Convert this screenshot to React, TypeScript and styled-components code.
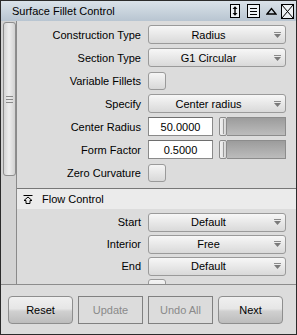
import React from "react";
import styled, { createGlobalStyle } from "styled-components";

const Global = createGlobalStyle`
  html, body { margin: 0; padding: 0; background: #dcdcdc; }
  body { width: 297px; height: 335px; overflow: hidden; }
`;

const Window = styled.div`
  width: 297px;
  height: 335px;
  box-sizing: border-box;
  border: 1px solid #2b2b2b;
  background: #dcdcdc;
  display: flex;
  flex-direction: column;
  overflow: hidden;
  font-family: "Liberation Sans", Arial, sans-serif;
  font-size: 11px;
  color: #000;
`;

const TitleBar = styled.div`
  height: 20px;
  flex: none;
  display: flex;
  align-items: center;
  padding: 0 2px 0 11px;
  background: linear-gradient(#dae2e9, #b8c5d1);
`;

const Title = styled.div`
  flex: 1;
  font-size: 11px;
  white-space: nowrap;
`;

const TitleIcon = styled.svg<{ $ml: number }>`
  display: block;
  margin-left: ${(p) => p.$ml}px;
  flex: none;
`;

const Body = styled.div`
  height: 264px;
  flex: none;
  box-sizing: border-box;
  display: flex;
  border-bottom: 1px solid #8c8c8c;
`;

const ScrollTrack = styled.div`
  width: 16px;
  flex: none;
  box-sizing: border-box;
  border-right: 1px solid #8a8a8a;
  background: #d3d3d3;
  padding: 1px 0 0 2px;
`;

const Thumb = styled.div`
  width: 13px;
  height: 154px;
  box-sizing: border-box;
  border: 1px solid #8e8e8e;
  border-radius: 3px;
  background: linear-gradient(90deg, #d4d4d4, #ededed 45%, #d2d2d2);
  display: flex;
  align-items: center;
  justify-content: center;
`;

const Content = styled.div`
  flex: 1;
  overflow: hidden;
  padding-top: 2px;
  display: flex;
  flex-direction: column;
`;

const Grid = styled.div<{ $row: number }>`
  display: grid;
  grid-template-columns: 124px 138px;
  column-gap: 7px;
  grid-auto-rows: ${(p) => p.$row}px;
  align-items: center;
  flex: none;
`;

const Label = styled.div`
  text-align: right;
  white-space: nowrap;
`;

const DropBox = styled.div`
  height: 19px;
  box-sizing: border-box;
  border: 1px solid #9a9a9a;
  border-radius: 3px;
  background: linear-gradient(#f7f7f7, #d9d9d9);
  display: flex;
  align-items: center;
`;

const DropText = styled.span`
  flex: 1;
  text-align: center;
  white-space: nowrap;
`;

const DropArrow = styled.svg`
  display: block;
  flex: none;
  margin: 0 4px 0 6px;
`;

const Check = styled.div`
  width: 18px;
  height: 18px;
  box-sizing: border-box;
  border: 1px solid #9a9a9a;
  border-radius: 3px;
  background: linear-gradient(#f5f5f5, #d8d8d8);
`;

const FieldRow = styled.div`
  display: flex;
  align-items: center;
`;

const Field = styled.div`
  width: 65px;
  height: 19px;
  box-sizing: border-box;
  background: #fff;
  border: 1px solid #8a8a8a;
  border-top-color: #6e6e6e;
  display: flex;
  align-items: center;
  justify-content: center;
`;

const Slider = styled.div`
  margin-left: 6px;
  flex: 1;
  height: 19px;
  display: flex;
`;

const Handle = styled.div`
  width: 8px;
  box-sizing: border-box;
  border: 1px solid #8a8a8a;
  border-radius: 2px;
  background: linear-gradient(90deg, #f2f2f2, #d6d6d6);
  position: relative;
  &::after {
    content: "";
    position: absolute;
    left: 3px;
    top: 1px;
    bottom: 1px;
    width: 1px;
    background: #9a9a9a;
  }
`;

const Track = styled.div`
  flex: 1;
  box-sizing: border-box;
  border: 1px solid #8c8c8c;
  border-left: none;
  background: linear-gradient(#9c9c9c, #bcbcbc);
`;

const SectionHeader = styled.div`
  margin-top: 4px;
  flex: none;
  height: 20px;
  border-top: 1px solid #777;
  background: #ebebeb;
  display: flex;
  align-items: center;
  padding-left: 6px;
`;

const HeaderIcon = styled.svg`
  display: block;
  margin-right: 9px;
`;

const LowerGrid = styled(Grid)`
  margin-top: 2px;
`;

const ButtonBar = styled.div`
  flex: 1;
  display: flex;
  gap: 5px;
  padding: 11px 0 0 7px;
`;

const Button = styled.div<{ $disabled?: boolean }>`
  width: 65px;
  height: 28px;
  box-sizing: border-box;
  display: flex;
  align-items: center;
  justify-content: center;
  font-size: 11px;
  border: 1px solid ${(p) => (p.$disabled ? "#808080" : "#8e8e8e")};
  border-radius: ${(p) => (p.$disabled ? "0" : "4px")};
  color: ${(p) => (p.$disabled ? "#8a8a8a" : "#000")};
  background: ${(p) =>
    p.$disabled
      ? "#dcdcdc"
      : "linear-gradient(#f0f0f0 0%, #e6e6e6 45%, #d0d0d0 55%, #bcbcbc 100%)"};
`;

const Arrow = () => (
  <DropArrow width="7" height="6" viewBox="0 0 7 6">
    <rect x="0" y="0" width="7" height="1" fill="#8a8a8a" />
    <polygon points="0,2 7,2 3.5,6" fill="#7a7a7a" />
  </DropArrow>
);

const Dropdown = ({ value }: { value: string }) => (
  <DropBox>
    <DropText>{value}</DropText>
    <Arrow />
  </DropBox>
);

const SliderField = ({ value }: { value: string }) => (
  <FieldRow>
    <Field>{value}</Field>
    <Slider>
      <Handle />
      <Track />
    </Slider>
  </FieldRow>
);

export default function App() {
  return (
    <>
      <Global />
      <Window>
        <TitleBar>
          <Title>Surface Fillet Control</Title>
          <TitleIcon $ml={0} width="10" height="14" viewBox="0 0 10 14">
            <rect x="0.5" y="0.5" width="9" height="13" fill="#eef2f5" stroke="#000" />
            <line x1="5" y1="4" x2="5" y2="10" stroke="#000" strokeWidth="1.4" />
            <polygon points="2.5,5 5,2.2 7.5,5" fill="#000" />
            <polygon points="2.5,9 5,11.8 7.5,9" fill="#000" />
          </TitleIcon>
          <TitleIcon $ml={7} width="13" height="14" viewBox="0 0 13 14">
            <rect x="0.5" y="0.5" width="12" height="13" fill="#eef2f5" stroke="#000" />
            <line x1="3" y1="4.5" x2="10" y2="4.5" stroke="#000" />
            <line x1="3" y1="7.5" x2="10" y2="7.5" stroke="#000" />
            <line x1="3" y1="10.5" x2="10" y2="10.5" stroke="#000" />
          </TitleIcon>
          <TitleIcon $ml={6} width="11" height="8" viewBox="0 0 11 8">
            <polygon points="1,7 5.5,1.5 10,7" fill="none" stroke="#000" strokeWidth="1.3" />
          </TitleIcon>
          <TitleIcon $ml={4} width="13" height="15" viewBox="0 0 13 15">
            <rect x="0.5" y="0.5" width="12" height="14" fill="#eef2f5" stroke="#000" />
            <line x1="1" y1="1" x2="12" y2="14" stroke="#000" />
            <line x1="12" y1="1" x2="1" y2="14" stroke="#000" />
          </TitleIcon>
        </TitleBar>
        <Body>
          <ScrollTrack>
            <Thumb>
              <svg width="7" height="8" viewBox="0 0 7 8" style={{ display: "block" }}>
                <line x1="0" y1="1.5" x2="7" y2="1.5" stroke="#8a8a8a" />
                <line x1="0" y1="4.5" x2="7" y2="4.5" stroke="#8a8a8a" />
                <line x1="0" y1="7.5" x2="7" y2="7.5" stroke="#8a8a8a" />
              </svg>
            </Thumb>
          </ScrollTrack>
          <Content>
            <Grid $row={23}>
              <Label>Construction Type</Label>
              <Dropdown value="Radius" />
              <Label>Section Type</Label>
              <Dropdown value="G1 Circular" />
              <Label>Variable Fillets</Label>
              <Check />
              <Label>Specify</Label>
              <Dropdown value="Center radius" />
              <Label>Center Radius</Label>
              <SliderField value="50.0000" />
              <Label>Form Factor</Label>
              <SliderField value="0.5000" />
              <Label>Zero Curvature</Label>
              <Check />
            </Grid>
            <SectionHeader>
              <HeaderIcon width="10" height="9" viewBox="0 0 10 9">
                <line x1="0.5" y1="0.5" x2="9.5" y2="0.5" stroke="#000" />
                <polygon
                  points="5,2 9,5.5 7,5.5 7,8.5 3,8.5 3,5.5 1,5.5"
                  fill="none"
                  stroke="#000"
                  strokeWidth="1"
                />
              </HeaderIcon>
              Flow Control
            </SectionHeader>
            <LowerGrid $row={22}>
              <Label>Start</Label>
              <Dropdown value="Default" />
              <Label>Interior</Label>
              <Dropdown value="Free" />
              <Label>End</Label>
              <Dropdown value="Default" />
              <Label></Label>
              <Check />
            </LowerGrid>
          </Content>
        </Body>
        <ButtonBar>
          <Button>Reset</Button>
          <Button $disabled>Update</Button>
          <Button $disabled>Undo All</Button>
          <Button>Next</Button>
        </ButtonBar>
      </Window>
    </>
  );
}
